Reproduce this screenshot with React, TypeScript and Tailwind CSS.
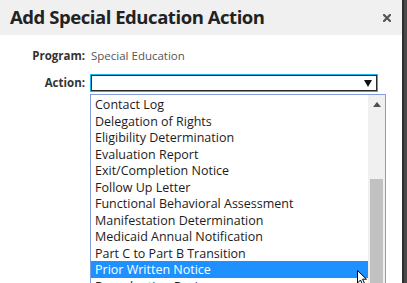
import React from "react";

const items = [
  "Contact Log",
  "Delegation of Rights",
  "Eligibility Determination",
  "Evaluation Report",
  "Exit/Completion Notice",
  "Follow Up Letter",
  "Functional Behavioral Assessment",
  "Manifestation Determination",
  "Medicaid Annual Notification",
  "Part C to Part B Transition",
  "Prior Written Notice",
  "Reevaluation Review",
];

export default function App() {
  return (
    <div
      className="w-[407px] h-[283px] overflow-hidden flex bg-[#3d3d3d]"
      style={{ fontFamily: '"Open Sans", "Liberation Sans", sans-serif' }}
    >
      <div className="w-[402px] h-full bg-white flex flex-col shrink-0">
        <div className="h-[35px] bg-[#f0f0f0] flex items-center justify-between pl-[10px] pr-[11px] shrink-0">
          <div className="text-[18.5px] font-bold text-[#222] leading-none tracking-[-0.45px]">
            Add Special Education Action
          </div>
          <svg width="8" height="8" viewBox="0 0 8 8" className="mt-[1px]">
            <path d="M1 1 L7 7 M7 1 L1 7" stroke="#555" strokeWidth="2.2" strokeLinecap="square" />
          </svg>
        </div>
        <div className="flex flex-col pt-[14px] gap-[11px]">
          <div className="flex items-center h-[14px] text-[11.5px]">
            <div className="w-[85px] text-right font-bold text-[#333]">Program:</div>
            <div className="pl-[6px] text-[#555]">Special Education</div>
          </div>
          <div className="flex items-center h-[18px] text-[11.5px]">
            <div className="w-[85px] text-right font-bold text-[#333]">Action:</div>
            <div className="ml-[5px] relative">
              <div className="w-[288px] h-[18px] border border-[#14b8ea] flex">
                <div className="flex-1 border border-[#2a2a2a] flex items-center justify-end pr-[4px]">
                  <svg width="8" height="7" viewBox="0 0 8 7">
                    <path d="M0 0 H8 L4 7 Z" fill="#111" />
                  </svg>
                </div>
              </div>
              <div className="absolute left-0 top-[20px] w-[296px] h-[200px] border border-[#7f9ddb] bg-white flex">
                <div className="flex-1 flex flex-col pt-[1px] text-[12.5px] text-[#1c1c1c]">
                  {items.map((t) => (
                    <div
                      key={t}
                      className={
                        "h-[16.5px] leading-[17px] pl-[4px] whitespace-nowrap " +
                        (t === "Prior Written Notice" ? "bg-[#1e90ff] text-white" : "")
                      }
                    >
                      {t}
                    </div>
                  ))}
                </div>
                <div className="w-[17px] bg-[#f0f0f0] flex flex-col items-center shrink-0">
                  <div className="h-[18px] flex items-center justify-center w-full">
                    <svg width="8" height="5" viewBox="0 0 8 5">
                      <path d="M4 0 L8 5 H0 Z" fill="#505050" />
                    </svg>
                  </div>
                  <div className="mt-[66px] w-[13px] flex-1 bg-[#c1c1c1]" />
                </div>
              </div>
              <svg
                className="absolute left-[267px] top-[196px]"
                width="12"
                height="16"
                viewBox="0 0 12 16"
              >
                <path d="M0.5 0.5 V13 L3.5 10 L5.8 15 L7.8 14 L5.6 9.2 H9.5 Z" fill="white" stroke="black" strokeWidth="1" />
              </svg>
            </div>
          </div>
        </div>
      </div>
      <div className="w-[2px] bg-[#2e2e2e]" />
      <div className="flex-1 bg-[#4a4a4a]" />
    </div>
  );
}
